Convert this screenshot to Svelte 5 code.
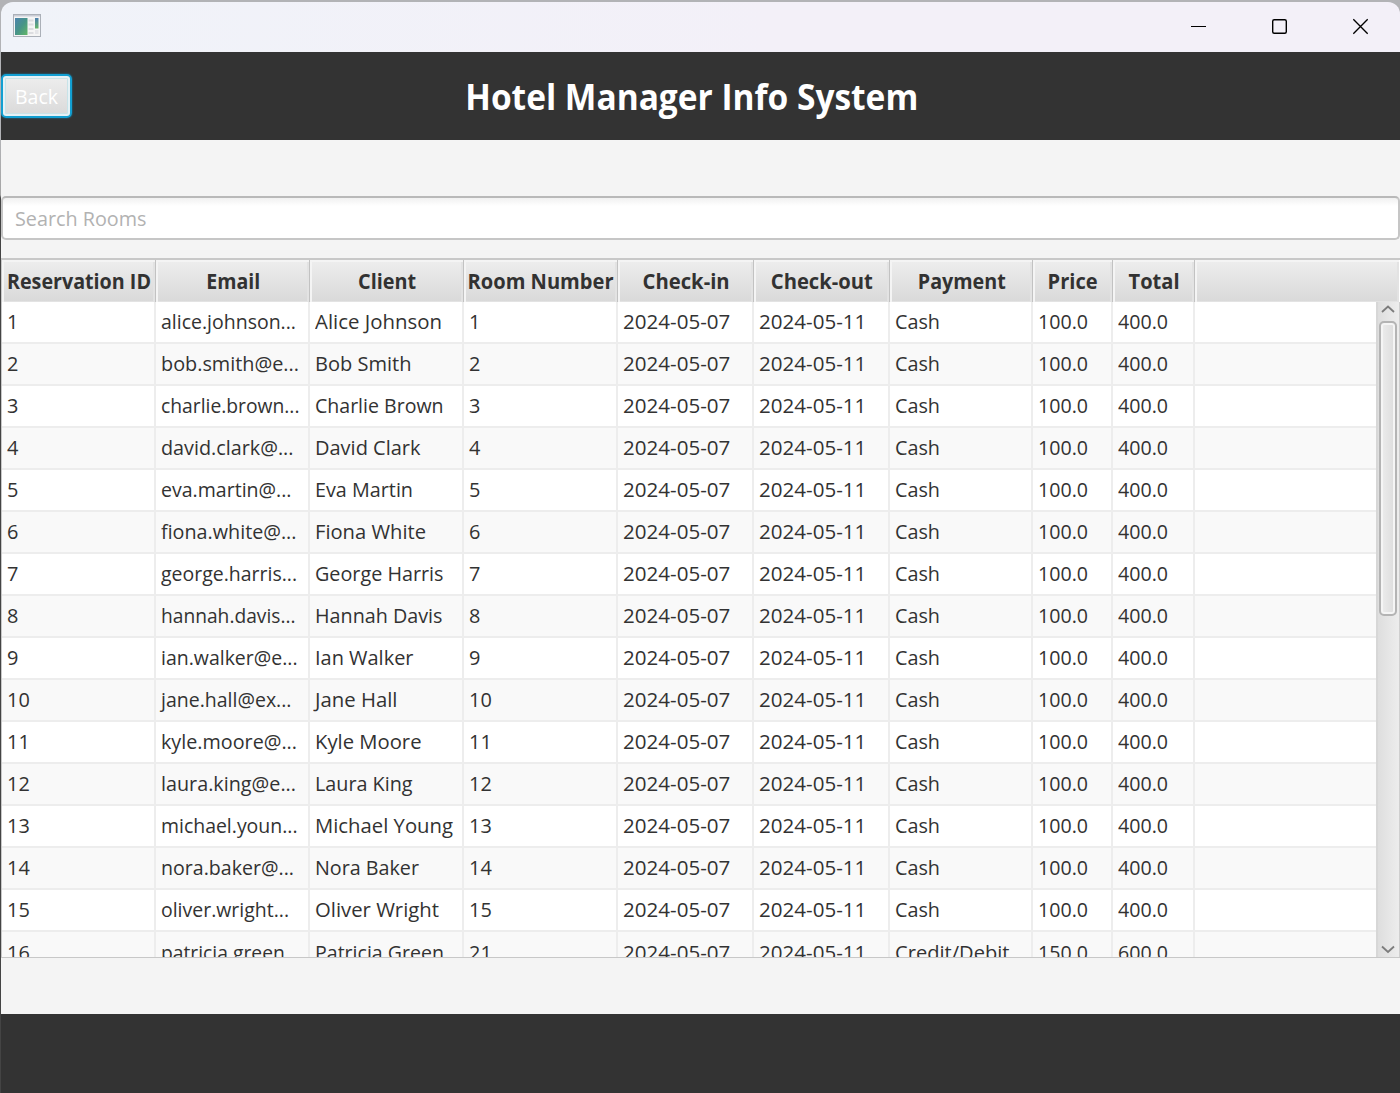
<script>
  const columns = [
    ['Reservation ID', 144], ['Email', 54], ['Client', 58], ['Room Number', 146], ['Check-in', 87],
    ['Check-out', 102], ['Payment', 88], ['Price', 50], ['Total', 51]
  ];
  // email, its width, client, its width
  const guests = [
    ['alice.johnson...', 135, 'Alice Johnson', 127],
    ['bob.smith@e...', 138, 'Bob Smith', 96.500],
    ['charlie.brown...', 138.500, 'Charlie Brown', 128.500],
    ['david.clark@...', 132.500, 'David Clark', 105.500],
    ['eva.martin@...', 130.500, 'Eva Martin', 98],
    ['fiona.white@...', 135.500, 'Fiona White', 111],
    ['george.harris...', 136, 'George Harris', 128.500],
    ['hannah.davis...', 134.500, 'Hannah Davis', 127.500],
    ['ian.walker@e...', 136.500, 'Ian Walker', 98.500],
    ['jane.hall@ex...', 130.500, 'Jane Hall', 82.500],
    ['kyle.moore@...', 136, 'Kyle Moore', 106.500],
    ['laura.king@e...', 135, 'Laura King', 97.500],
    ['michael.youn...', 136.500, 'Michael Young', 138],
    ['nora.baker@...', 133, 'Nora Baker', 104],
    ['oliver.wright...', 128, 'Oliver Wright', 124],
    ['patricia.green...', 139, 'Patricia Green', 129]
  ];
  const rows = guests.map(([email, ew, client, cw], i) => {
    const id = String(i + 1);
    const last = i === 15;
    const room = last ? '21' : id;
    return [
      [id, id.length * 11.4], [email, ew], [client, cw], [room, room.length * 11.4],
      ['2024-05-07', 107.3], ['2024-05-11', 107.3],
      last ? ['Credit/Debit', 114.5] : ['Cash', 45],
      [last ? '150.0' : '100.0', 50], [last ? '600.0' : '400.0', 50]
    ];
  });

  // Condenses a label horizontally to the given width.
  function fit(node, width) {
    node.style.transform = `scaleX(${width / node.getBoundingClientRect().width})`;
  }
</script>

<div class="desktop">
  <div class="window">
    <header class="titlebar">
      <svg class="app" width="28" height="24" viewBox="0 0 28 24">
        <defs>
          <linearGradient id="pane" x1="0" y1="0" x2="1" y2="1"><stop offset="0" stop-color="#4d83ae" /><stop offset=".5" stop-color="#479488" /><stop offset="1" stop-color="#62b766" /></linearGradient>
          <linearGradient id="strip" x1="0" y1="0" x2="0" y2="1"><stop offset="0" stop-color="#4c7fae" /><stop offset="1" stop-color="#65b568" /></linearGradient>
        </defs>
        <rect x=".5" y=".5" width="27" height="22" fill="#f5f5f5" stroke="#abb0b8" />
        <path d="M1 1.700h26" stroke="#c9ccd5" stroke-width="1.400" />
        <rect x="2" y="4" width="12.500" height="17" fill="url(#pane)" />
        <path d="M15.500 6.500h5M15.500 10.500h5M15.500 15h5M15.500 19h5" stroke="#dcdde0" stroke-width="2.200" />
        <rect x="22" y="4" width="3.500" height="10.500" fill="url(#strip)" />
        <path d="M22 16h3.500v4H22z" fill="#e4e5e8" />
      </svg>
      <div class="controls">
        <svg width="17" height="17" viewBox="0 0 17 17"><path d="M1 8.500h15" stroke="#000" /></svg>
        <svg width="17" height="17" viewBox="0 0 17 17"><rect x="1.700" y="1.700" width="13.600" height="13.600" rx="1.500" fill="none" stroke="#000" stroke-width="1.400" /></svg>
        <svg width="17" height="17" viewBox="0 0 17 17"><path d="M1.300 1.300l14.400 14.400M15.700 1.300L1.300 15.700" stroke="#000" stroke-width="1.350" /></svg>
      </div>
    </header>

    <div class="banner">
      <button><span class="label" use:fit={43}>Back</span></button>
      <h1><span class="label mid" use:fit={453}>Hotel Manager Info System</span></h1>
    </div>

    <main>
      <div class="search"><span class="label" use:fit={131.5}>Search Rooms</span></div>
      <div class="table">
        <div class="grid head">
          {#each columns as [name, width]}
            <div class="th"><span class="label mid" use:fit={width}>{name}</span></div>
          {/each}
          <div class="th"></div>
        </div>
        <div class="body">
          <div class="rows">
            {#each rows as row}
              <div class="grid row">
                {#each row as [text, width]}
                  <div class="td"><span class="label" use:fit={width}>{text}</span></div>
                {/each}
                <div class="td rest"></div>
              </div>
            {/each}
          </div>
          <div class="scroll">
            <svg width="14" height="9" viewBox="0 0 14 9"><path d="M1 7L7 1.500l6 5.500" fill="none" stroke="#7c7c7c" stroke-width="1.800" /></svg>
            <div class="thumb"></div>
            <svg class="down" width="14" height="9" viewBox="0 0 14 9"><path d="M1 1.500L7 7l6-5.500" fill="none" stroke="#7c7c7c" stroke-width="1.800" /></svg>
          </div>
        </div>
      </div>
    </main>
    <footer></footer>
  </div>
</div>

<style>
  :global(body) { margin: 0; }
  .desktop, .desktop * { box-sizing: border-box; }
  .desktop {
    width: 1400px;
    height: 1093px;
    padding: 2px 0 0 1px;
    overflow: hidden;
    background: linear-gradient(#b2b3b6 0 140px, #a5a5a5 195px, #444 198px);
    font: 20.500px/42px "Open Sans", "Noto Sans", sans-serif;
    color: #323232;
  }
  .window { height: 1091px; display: flex; flex-direction: column; border-radius: 12px 12px 0 0; overflow: hidden; }
  .label { display: inline-block; white-space: pre; transform-origin: left center; }
  .mid { transform-origin: center; }
  .titlebar {
    height: 50px;
    flex: none;
    display: flex;
    justify-content: space-between;
    background: linear-gradient(90deg, #f0f3f9, #f3f0f8 55%);
    padding: 12px 31px 0 12px;
  }
  .controls { display: flex; gap: 64px; padding-top: 4px; }
  .banner { height: 88px; flex: none; display: flex; align-items: center; background: #333; }
  button {
    width: 71px;
    height: 44px;
    flex: none;
    padding: 0 0 0 12px;
    text-align: left;
    border: 2px solid #129fd2;
    border-radius: 5px;
    background: linear-gradient(#eee, #d9d9d9);
    box-shadow: inset 0 0 0 2px #e6f1f5, inset 0 0 0 3px #c8e3e8, 0 0 2px #0c8fbd;
    font: 20.500px/38px "Open Sans", sans-serif;
    color: #fff;
  }
  h1 { flex: 1; margin: 0 88px 0 0; padding-top: 2px; text-align: center; color: #fff; font-size: 35px; font-weight: 700; line-height: 86px; }
  main { height: 874px; flex: none; padding-top: 56px; background: #f4f4f4; }
  .search {
    height: 44px;
    padding-left: 12px;
    border: 2px solid #c6c6c6;
    border-top-color: #b9b9b9;
    border-radius: 5px;
    background: linear-gradient(#f1f1f1, #fff 8px);
    line-height: 40px;
    color: #b2b2b2;
  }
  .table { height: 700px; margin-top: 18px; border: 1px solid #c8c8c8; border-top-width: 2px; border-right: 0; display: flex; flex-direction: column; }
  .grid { display: grid; grid-template-columns: 154px 154px 154px 154px 136px 136px 143px 80px 82px 1fr; }
  .head { height: 42px; flex: none; font-weight: 700; }
  .th {
    display: flex;
    justify-content: center;
    padding-left: 1px;
    border-right: 1px solid #c2c2c2;
    border-bottom: 2px solid #c5c5c5;
    background: linear-gradient(#eee, #d9d9d9);
    box-shadow: inset 2px 2px #f4f4f4, inset -2px -1px #e3e3e3;
  }
  .th:last-child { border-right-color: #fff; }
  .body { flex: 1; min-height: 0; display: flex; overflow: hidden; }
  .rows { width: 1374px; flex: none; overflow: hidden; }
  .row { height: 42px; background: #fff; }
  .row:nth-child(even) { background: #f9f9f9; }
  .td { padding-left: 5px; line-height: 39px; border-right: 2px solid #ededed; border-bottom: 2px solid #ededed; overflow: hidden; }
  .row:last-child .td { line-height: 41px; }
  .rest { border-right: 0; }
  .scroll {
    flex: 1;
    display: flex;
    flex-direction: column;
    align-items: center;
    padding: 3px 1px 3px 0;
    border-left: 2px solid #d7d7d7;
    border-right: 1px solid #cfcfcf;
    background: linear-gradient(90deg, #dedede, #ededed);
  }
  .thumb {
    width: 18px;
    height: 295px;
    margin-top: 7px;
    border: 2px solid #b4b4b4;
    border-radius: 5px;
    background: linear-gradient(90deg, #ededed, #dcdcdc);
    box-shadow: inset 0 0 0 2px #f5f5f5;
  }
  .down { margin-top: auto; }
  footer { flex: 1; background: #333; }
</style>
